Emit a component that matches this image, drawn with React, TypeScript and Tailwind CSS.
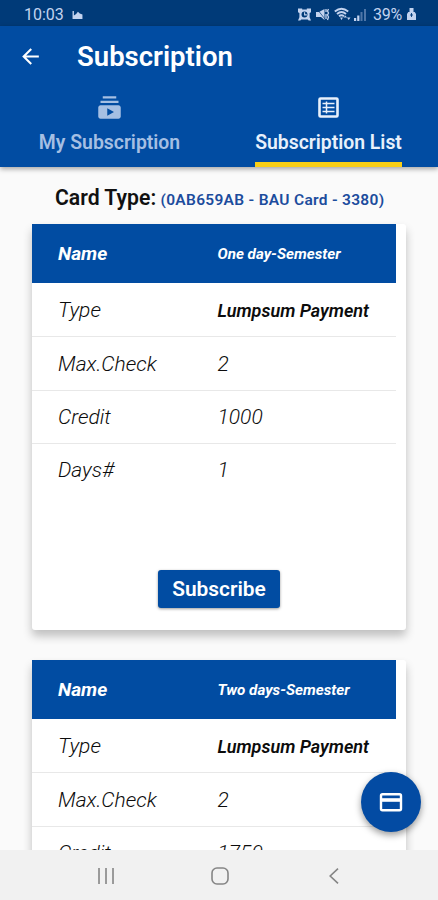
import { MdArrowBack, MdSubscriptions } from 'react-icons/md';

type Plan = {
  name: string;
  type: string;
  maxCheck: number;
  credit: number;
  days: number;
};

const plans: Plan[] = [
  { name: 'One day-Semester', type: 'Lumpsum Payment', maxCheck: 2, credit: 1000, days: 1 },
  { name: 'Two days-Semester', type: 'Lumpsum Payment', maxCheck: 2, credit: 1750, days: 2 },
];

function StatusBar() {
  return (
    <div className="flex h-[26px] shrink-0 items-center bg-[#003a78] pt-[2px] pl-[24px] text-[16px] leading-none text-[#c3d3ef]">
      <span className="w-[39px] pt-[1px]">10:03</span>
      <svg className="ml-[9px] h-[9px] w-[11px]" viewBox="0 0 11 10" fill="currentColor">
        <path d="M0 1h1.500v5L4 4.500 6 2l2 2 3 1v5H0z" />
      </svg>
      <svg className="ml-[215px] h-[13px] w-[13px]" viewBox="0 0 14 13" fill="currentColor">
        <path d="M0 0h4.500v1h5V0H14v4l-1.500 1v4.500L14 13h-2.500l-1-1h-7l-1 1H0l1.500-3.500V5L0 4z" />
        <circle cx="7" cy="6.500" r="3.200" fill="#003a78" />
        <path d="M6.500 4h1.200v2.300H9.500v1.200h-3z" />
      </svg>
      <svg className="ml-[5px] h-[13px] w-[14px]" viewBox="0 0 14 13" fill="currentColor">
        <path d="M0 4h3L8.500 1v11L5 9H0z" />
        <path d="M1 1l8 10" stroke="#003a78" strokeWidth=".7" />
        <path d="M10 1v3M10 6v5M12.500 1l-1 2 1 2-1 2 1 2-1 3" stroke="currentColor" strokeWidth="1.300" fill="none" />
      </svg>
      <svg className="ml-[4px] h-[14px] w-[17px]" viewBox="0 0 17 14" fill="none" stroke="currentColor">
        <path d="M.8 4.500Q7.500-1 14.200 4.500M3 7q4.500-4 9 0M5 9.200q2.500-2 5 0" strokeWidth="1.900" />
        <path d="M6 10.500h3L7.500 13zM9.500 10.500l1.800-2 1.800 2zM13 10.500h3.500L14.700 13z" fill="currentColor" stroke="none" />
      </svg>
      <svg className="ml-[3px] h-[13px] w-[12px]" viewBox="0 0 12 13" fill="currentColor">
        <path d="M0 10h2.200v3H0zM3.200 7.500h2.200V13H3.200z" />
        <path d="M6.500 4h2v9h-2zM10 1h2v12h-2z" opacity=".4" />
      </svg>
      <span className="ml-[7px] w-[30px] pt-[1px] text-[16px] tracking-[-0.300px]">39%</span>
      <svg className="ml-[4px] h-[12px] w-[9px]" viewBox="0 0 9 12" fill="currentColor">
        <path d="M2.500 0h4v4h1.200L9 6v6H0V6l1.300-2h1.200z" />
        <path d="M4.500 5v4M3 7h3" stroke="#003a78" strokeWidth=".9" />
      </svg>
    </div>
  );
}

function ListIcon() {
  return (
    <svg className="h-[27px] w-[27px]" viewBox="0 0 27 27" fill="none" stroke="currentColor">
      <rect x="4.500" y="4.500" width="18" height="18" rx="1" strokeWidth="2.600" />
      <path d="M7.500 9.500h12M7.500 13.500h12M7.500 17.500h12" strokeWidth="1.300" />
      <path d="M11.500 7.500v12" strokeWidth="1.500" />
    </svg>
  );
}

function CardIcon() {
  return (
    <svg className="h-[26px] w-[26px]" viewBox="0 0 26 26" fill="none" stroke="currentColor">
      <rect x="3" y="5.200" width="20" height="16" rx="1.500" strokeWidth="2.400" />
      <path d="M3 11h20" strokeWidth="3.600" />
    </svg>
  );
}

function AppBar() {
  return (
    <header className="relative z-10 flex h-[141px] shrink-0 flex-col bg-[#014ca2] shadow-[0_2px_5px_rgba(0,0,0,0.35)]">
      <div className="flex h-[60px] items-center pl-[18px] text-white">
        <MdArrowBack size={25} />
        <h1 className="ml-[34px] pt-[2px] text-[27.500px] font-semibold leading-none">Subscription</h1>
      </div>
      <nav className="grid flex-1 grid-cols-2 text-[19.400px] font-semibold leading-none">
        <div className="flex flex-col items-center pt-[8px] text-[#a5bfe3]">
          <MdSubscriptions size={27} />
          <span className="mt-[12px]">My Subscription</span>
        </div>
        <div className="flex flex-col items-center justify-between pt-[8px] text-[#e8f0fb]">
          <div className="flex flex-col items-center">
            <ListIcon />
            <span className="mt-[12px]">Subscription List</span>
          </div>
          <div className="h-[5px] w-[147px] bg-[#f9cf16]" />
        </div>
      </nav>
    </header>
  );
}

function PlanCard({ plan }: { plan: Plan }) {
  const rows = [
    { label: 'Type', value: plan.type, strong: true },
    { label: 'Max.Check', value: plan.maxCheck },
    { label: 'Credit', value: plan.credit },
    { label: 'Days#', value: plan.days },
  ];

  return (
    <article className="flex h-[406px] shrink-0 flex-col rounded-[3px] bg-white shadow-[0_6px_10px_rgba(0,0,0,0.24)]">
      <div className="flex h-[59px] w-[364px] items-center bg-[#014ca2] pt-[2px] pl-[26px] font-bold italic text-white">
        <span className="w-[159.500px] text-[19.200px]">Name</span>
        <span className="text-[15.200px]">{plan.name}</span>
      </div>
      <div className="w-[364px] pt-px">
        {rows.map((r) => (
          <div
            key={r.label}
            className="flex h-[53.300px] items-center border-b border-[#e8e8e8] pt-[2px] pl-[26px] italic text-[#0c0c0c] last:border-transparent"
          >
            <span className="w-[159.500px] text-[21px] font-light">{r.label}</span>
            <span className={r.strong ? 'pb-[2px] text-[18px] font-semibold' : 'text-[21px] font-light'}>
              {r.value}
            </span>
          </div>
        ))}
      </div>
      <button
        type="button"
        className="mt-auto mb-[22px] h-[38px] w-[122px] self-center rounded-[3px] bg-[#014ca2] text-[20.900px] font-semibold leading-none text-white shadow-[0_1px_3px_rgba(0,0,0,0.4)]"
      >
        Subscribe
      </button>
    </article>
  );
}

function NavigationBar() {
  return (
    <footer className="relative z-10 flex h-[50px] shrink-0 items-center bg-[#f1f1f1] pt-[2px] text-[#858585]">
      <svg className="ml-[98px] h-[16px] w-[16px]" viewBox="0 0 16 16" stroke="currentColor" strokeWidth="1.600">
        <path d="M1 0v16M8 0v16M15 0v16" />
      </svg>
      <svg className="ml-[97px] h-[18px] w-[18px]" viewBox="0 0 18 18" fill="none" stroke="currentColor" strokeWidth="1.600">
        <rect x="1" y="1" width="16" height="16" rx="5" />
      </svg>
      <svg className="ml-[100px] h-[16px] w-[10px]" viewBox="0 0 10 16" fill="none" stroke="currentColor" strokeWidth="1.600">
        <path d="M9 .7L1.200 8 9 15.300" />
      </svg>
    </footer>
  );
}

export default function App() {
  return (
    <div className="relative flex h-[900px] w-[438px] flex-col overflow-hidden bg-[#fafafa] font-[Roboto,sans-serif]">
      <StatusBar />
      <AppBar />
      <main className="flex min-h-0 flex-1 flex-col overflow-hidden">
        <p className="flex h-[57px] shrink-0 items-baseline pt-[19px] pl-[55px] leading-[24px]">
          <span className="w-[105.500px] text-[21.200px] font-semibold text-[#111]">Card Type:</span>
          <span className="text-[15.500px] font-semibold tracking-[0.300px] text-[#1c4c9d]">
            (0AB659AB - BAU Card - 3380)
          </span>
        </p>
        <div className="flex flex-col gap-[30px] pr-[32px] pl-[32px]">
          {plans.map((p) => (
            <PlanCard key={p.name} plan={p} />
          ))}
        </div>
      </main>
      <button
        type="button"
        aria-label="Cards"
        className="absolute top-[772px] left-[361px] z-20 flex size-[60px] items-center justify-center rounded-full bg-[#034ba3] text-white shadow-[0_3px_7px_rgba(0,0,0,0.4)]"
      >
        <CardIcon />
      </button>
      <NavigationBar />
    </div>
  );
}
